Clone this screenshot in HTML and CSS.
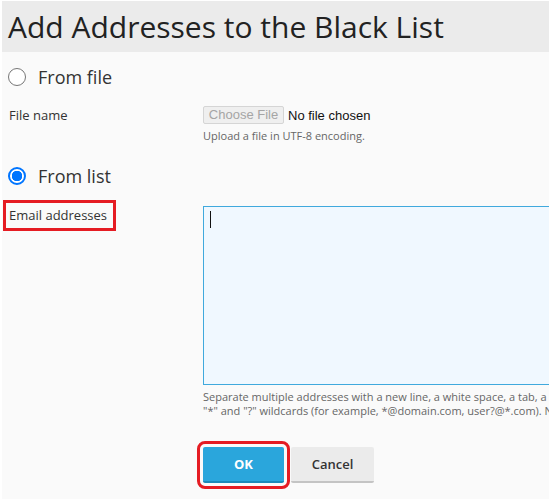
FILE: index.html
```html
<!DOCTYPE html>
<html lang="en">
<head>
  <meta charset="UTF-8" />
  <title>Add Addresses to the Black List</title>
  <link rel="stylesheet" href="styles.css">
</head>
<body>

  <div class="page">
    <div class="page-header">
      <h1>Add Addresses to the Black List</h1>
    </div>

    <form class="page-content">
      <label class="source">
        <input type="radio" name="source" value="file" class="radio">
        <span>From file</span>
      </label>

      <div class="form-row">
        <div class="form-label">File name</div>
        <div class="form-field">
          <div class="file-picker">
            <span class="file-button">Choose File</span>
            <span class="file-status">No file chosen</span>
          </div>
          <div class="hint">Upload a file in UTF-8 encoding.</div>
        </div>
      </div>

      <label class="source source-list">
        <input type="radio" name="source" value="list" class="radio" checked>
        <span>From list</span>
      </label>

      <div class="form-row form-row-list">
        <div class="form-label"><span class="marked">Email addresses</span></div>
        <div class="form-field">
          <div class="textarea-box">
            <textarea class="addresses"></textarea>
          </div>
          <div class="hint hint-wide">Separate multiple addresses with a new line, a white space, a tab, a comma, or a semicolon. You can use the "*" and "?" wildcards (for example, *@domain.com, user?@*.com). No more than 100 addresses are allowed.</div>
        </div>
      </div>

      <div class="buttons">
        <button type="submit" class="btn btn-primary marked-btn">OK</button>
        <button type="button" class="btn">Cancel</button>
      </div>
    </form>
  </div>

</body>
</html>
```

FILE: styles.css
```css
body {
  margin: 0;
  background: #fff;
  font-family: "Open Sans", "Liberation Sans", sans-serif;
  color: #333;
  overflow: hidden;
}

.page {
  margin: 1px 0 0 2px;
  background: #fafafa;
  min-height: 498px;
}

.page-header {
  background: #ebebeb;
  height: 51px;
  padding: 0 6px;
  display: flex;
  align-items: center;
}

h1 {
  margin: 0;
  font-size: 30px;
  font-weight: 400;
  color: #222;
  white-space: nowrap;
}

.page-content {
  padding: 13px 0 0 6px;
}

/* Radio choice */
.source {
  display: flex;
  align-items: center;
  gap: 12px;
  height: 24px;
  font-size: 18px;
  color: #333;
}

.source-list {
  margin-top: 20px;
}

.radio {
  appearance: none;
  margin: 0;
  width: 18px;
  height: 18px;
  border: 1.5px solid #767676;
  border-radius: 50%;
  background: #fff;
  box-sizing: border-box;
}

.radio:checked {
  border: 2px solid #0075ff;
  background: radial-gradient(circle, #0075ff 0 5px, #fff 5.5px);
}

/* Rows */
.form-row {
  display: flex;
  margin-top: 17px;
}

.form-row-list {
  margin-top: 18px;
}

.form-label {
  width: 194px;
  flex-shrink: 0;
  font-size: 13px;
  line-height: 18px;
  padding-left: 1px;
}

.form-field {
  width: 566px;
  flex-shrink: 0;
}

.marked {
  display: inline-block;
  padding: 3px 6px 4px 3px;
  margin: -3px -6px -4px -3px;
  outline: 3px solid #e51c23;
}

.file-picker {
  display: flex;
  align-items: center;
  gap: 4px;
}

.file-button {
  height: 18px;
  width: 81px;
  box-sizing: border-box;
  border: 1px solid #d5d5d5;
  border-radius: 2px;
  background: #efefef;
  color: #a5a5a5;
  font-family: "Liberation Sans", sans-serif;
  font-size: 13px;
  line-height: 16px;
  text-align: center;
}

.file-status {
  font-family: "Liberation Sans", sans-serif;
  font-size: 13px;
  color: #111;
}

.hint {
  margin-top: 4px;
  font-size: 11px;
  line-height: 16px;
  color: #666;
}

.hint-wide {
  margin-top: 5px;
  line-height: 14px;
}

.textarea-box {
  position: relative;
}

.textarea-box::after {
  content: "";
  position: absolute;
  left: 7px;
  top: 5px;
  width: 1px;
  height: 17px;
  background: #111;
}

.addresses {
  display: block;
  width: 400px;
  height: 179px;
  box-sizing: border-box;
  margin: 0;
  border: 1px solid #40a9dd;
  background: #f0f8ff;
  resize: none;
  outline: none;
}

.buttons {
  display: flex;
  gap: 7px;
  margin: 29px 0 0 195px;
}

.btn {
  height: 36px;
  width: 83px;
  border: none;
  border-bottom: 2px solid #c4c4c4;
  border-radius: 2px;
  background: #ebebeb;
  color: #333;
  font-family: "Open Sans", sans-serif;
  font-size: 13px;
  font-weight: 600;
  cursor: pointer;
}

.btn-primary {
  width: 81px;
  background: #2aa6dc;
  border-bottom-color: #1d89b9;
  color: #fff;
  font-weight: 700;
}

.marked-btn {
  outline: 3px solid #e51c23;
  outline-offset: 3px;
}
```
